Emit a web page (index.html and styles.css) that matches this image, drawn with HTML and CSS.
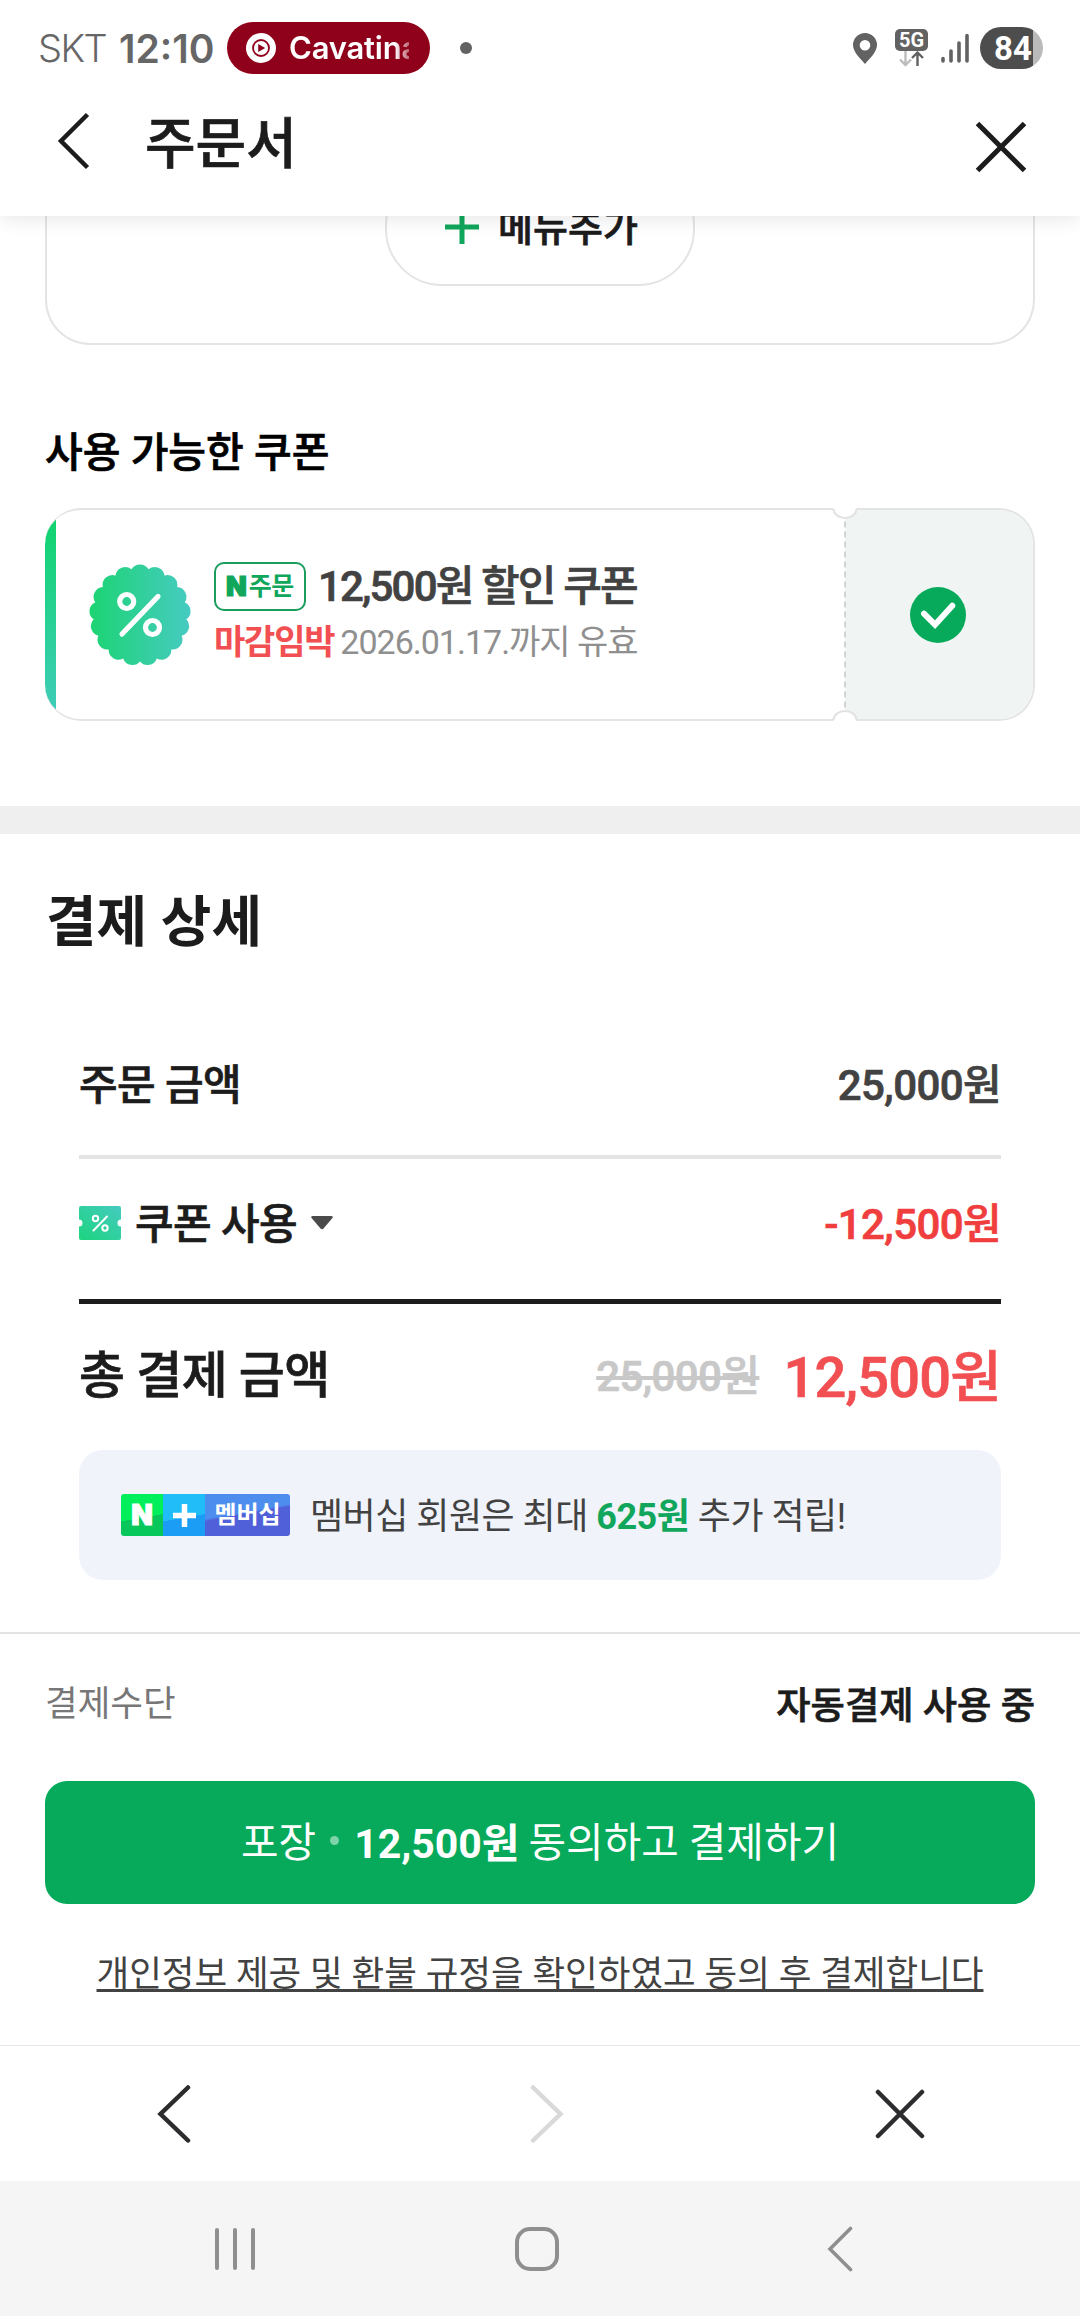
FILE: index.html
```html
<!DOCTYPE html>
<html lang="ko">
<head>
<meta charset="utf-8">
<title>주문서</title>
<link rel="stylesheet" href="styles.css">
</head>
<body>
<header class="top">
  <div class="status">
    <span class="carrier">SKT</span>
    <span class="clock">12:10</span>
    <div class="media">
      <svg width="30" height="30" viewBox="0 0 30 30"><circle cx="15" cy="15" r="15" fill="#fff"/><circle cx="15" cy="15" r="8" fill="none" stroke="#8f001a" stroke-width="1.8"/><path d="M12.2 11l7 4-7 4z" fill="#8f001a"/></svg>
      <span class="track">Cavatina</span>
    </div>
    <i class="more-dot"></i>
    <div class="status-icons">
      <svg class="pin" width="24" height="31" viewBox="0 0 24 31"><path fill="#626262" fill-rule="evenodd" d="M12 0a12 12 0 0 1 12 12c0 7-7 13-12 19C7 25 0 19 0 12A12 12 0 0 1 12 0zm0 7a5.300 5.300 0 1 0 0 10.600A5.300 5.300 0 0 0 12 7z"/></svg>
      <div class="net">
        <span class="net-label">5G</span>
        <svg width="33" height="16" viewBox="0 0 33 16" fill="none" stroke-width="2.400"><path stroke="#bdbdbd" d="M10.500 0v14M5 8.500l5.500 5.500 5.500-5.500"/><path stroke="#626262" d="M22.500 15V2M17 7l5.500-5.500L28 7"/></svg>
      </div>
      <svg class="signal" width="28" height="30" viewBox="0 0 28 30" stroke="#626262" stroke-width="3.600" stroke-linecap="round"><path d="M2 25.500v2.500M10 18v10M18 10v18M26 2.500v25.500"/></svg>
      <div class="battery">84</div>
    </div>
  </div>
  <div class="title-bar">
    <svg class="back" width="34" height="58" viewBox="0 0 34 58" fill="none" stroke="#1c1c1c" stroke-width="4.500"><path d="M30.500 2.500L4 29l26.500 26.500"/></svg>
    <h1>주문서</h1>
    <svg class="close" width="52" height="52" viewBox="0 0 52 52" stroke="#1c1c1c" stroke-width="5"><path d="M2.500 2.500l47 47M49.500 2.500l-47 47"/></svg>
  </div>
</header>

<main>
  <section class="menu-card">
    <div class="add-menu">
      <svg width="34" height="34" viewBox="0 0 34 34" stroke="#10a65b" stroke-width="5"><path d="M17 0v34M0 17h34"/></svg>
      <span>메뉴추가</span>
    </div>
  </section>

  <section class="coupons">
    <h2>사용 가능한 쿠폰</h2>
    <div class="coupon">
      <div class="coupon-body">
        <div class="coupon-info">
          <svg width="102" height="102" viewBox="-51 -51 102 102">
            <defs><linearGradient id="seal" x1="0" x2="1" y1="0" y2="0"><stop offset="0" stop-color="#1cd472"/><stop offset="1" stop-color="#46cbc2"/></linearGradient></defs>
            <path fill="url(#seal)" d="M-8.500-45.700A9.800 9.800 0 0 1 8.500-45.700A9.800 9.800 0 0 1 24.500-39.500A9.800 9.800 0 0 1 37.100-28A9.800 9.800 0 0 1 44.700-12.700A9.800 9.800 0 0 1 46.300 4.300A9.800 9.800 0 0 1 41.600 20.700A9.800 9.800 0 0 1 31.300 34.400A9.800 9.800 0 0 1 16.800 43.400A9.800 9.800 0 0 1 0 46.500A9.800 9.800 0 0 1-16.800 43.400A9.800 9.800 0 0 1-31.300 34.400A9.800 9.800 0 0 1-41.600 20.700A9.800 9.800 0 0 1-46.300 4.300A9.800 9.800 0 0 1-44.700-12.700A9.800 9.800 0 0 1-37.100-28A9.800 9.800 0 0 1-24.500-39.500A9.800 9.800 0 0 1-8.500-45.700z"/>
            <g fill="none" stroke="#fff" stroke-width="5.200" stroke-linecap="round"><circle cx="-13.300" cy="-13.500" r="7"/><circle cx="12.500" cy="12.500" r="7"/><path d="M18-18.500l-36 37.500"/></g>
          </svg>
          <div class="coupon-text">
            <div class="coupon-title"><span class="tag"><b>N</b><span>주문</span></span><strong>12,500원 할인 쿠폰</strong></div>
            <div class="coupon-date"><b>마감임박</b><span>2026.01.17.까지 유효</span></div>
          </div>
        </div>
        <div class="coupon-check">
          <svg width="56" height="56" viewBox="0 0 56 56"><circle cx="28" cy="28" r="28" fill="#06aa5a"/><path d="M14 26.700l11 11L42.300 18.700" fill="none" stroke="#fff" stroke-width="6" stroke-linecap="round"/></svg>
        </div>
      </div>
      <svg class="perforation" width="26" height="213" viewBox="0 0 26 213">
        <path d="M1.500 0a11.500 10 0 0 0 23 0z" fill="#fff"/><path d="M1.500 1a11.500 9 0 0 0 23 0" fill="none" stroke="#e2e2e2" stroke-width="2"/>
        <path d="M1.500 213a11.500 10 0 0 1 23 0z" fill="#fff"/><path d="M1.500 212a11.500 9 0 0 1 23 0" fill="none" stroke="#e2e2e2" stroke-width="2"/>
        <path d="M13 13.500v187" stroke="#d3d3d3" stroke-width="2" stroke-dasharray="6 4"/>
      </svg>
    </div>
  </section>

  <section class="payment">
    <h2>결제 상세</h2>
    <div class="bill">
      <div class="row order"><span class="label">주문 금액</span><span class="price">25,000원</span></div>
      <div class="row discount">
        <span class="label with-icon">
          <svg class="ticket" width="42" height="34" viewBox="0 0 42 34"><defs><linearGradient id="ticket" x1="0" x2="1" y1="1" y2="0"><stop offset="0" stop-color="#1cd47e"/><stop offset="1" stop-color="#45cbc0"/></linearGradient></defs><path fill="url(#ticket)" d="M2 0h38a2 2 0 0 1 2 2v11.500a3.500 3.500 0 0 0 0 7V32a2 2 0 0 1-2 2H2a2 2 0 0 1-2-2V20.500a3.500 3.500 0 0 0 0-7V2a2 2 0 0 1 2-2z"/><g fill="none" stroke="#fff" stroke-width="2" stroke-linecap="round"><circle cx="16.500" cy="12.500" r="2.700"/><circle cx="26" cy="22" r="2.700"/><path d="M28 10.500L14.500 24.500"/></g></svg>
          <span>쿠폰 사용</span>
          <svg class="caret" width="22" height="14" viewBox="0 0 22 14"><path d="M2 0h18q3 0 1 2.500l-8.500 10q-1.500 1.500-3 0L1 2.500Q-1 0 2 0z" fill="#4a4a4a"/></svg>
        </span>
        <span class="price red">-12,500원</span>
      </div>
      <div class="row total"><span class="label">총 결제 금액</span><span class="amounts"><del>25,000원</del><strong>12,500원</strong></span></div>
      <div class="membership">
        <span class="badge"><b class="n">N</b><svg class="plus" width="42" height="42" viewBox="0 0 42 42" stroke="#fff" stroke-width="5.500"><path d="M21.500 10v23M10 21.500h23"/></svg><b class="word">멤버십</b></span>
        <p>멤버십 회원은 최대 <b>625원</b> 추가 적립!</p>
      </div>
    </div>
  </section>
</main>

<footer class="checkout">
  <div class="method"><span>결제수단</span><strong>자동결제 사용 중</strong></div>
  <div class="pay"><span>포장</span><i></i><b>12,500원</b><span class="agree">동의하고 결제하기</span></div>
  <p class="terms"><span>개인정보 제공 및 환불 규정을 확인하였고 동의 후 결제합니다</span></p>
</footer>

<nav class="browser-bar">
  <svg class="b-back" width="34" height="58" viewBox="0 0 34 58" fill="none" stroke="#2c2c2e" stroke-width="4.500" stroke-linecap="round"><path d="M31 2.500L3.500 29 31 55.500"/></svg>
  <svg class="b-next" width="34" height="58" viewBox="0 0 34 58" fill="none" stroke="#d9d9d9" stroke-width="4.500" stroke-linecap="round"><path d="M3 2.500L30.500 29 3 55.500"/></svg>
  <svg class="b-close" width="50" height="50" viewBox="0 0 50 50" stroke="#2c2c2e" stroke-width="4.500" stroke-linecap="round"><path d="M3 3l44 44M47 3L3 47"/></svg>
</nav>
<nav class="system-bar">
  <svg class="s-recent" width="40" height="42" viewBox="0 0 40 42" stroke="#8f8f8f" stroke-width="4" stroke-linecap="round"><path d="M2 2v38M20 2v38M38 2v38"/></svg>
  <svg class="s-home" width="44" height="44" viewBox="0 0 44 44" fill="none" stroke="#8f8f8f" stroke-width="4"><rect x="2" y="2" width="40" height="40" rx="13"/></svg>
  <svg class="s-back" width="26" height="46" viewBox="0 0 26 46" fill="none" stroke="#8f8f8f" stroke-width="3.600" stroke-linecap="round"><path d="M23.500 2.500L3 23l20.500 20.500"/></svg>
</nav>
</body>
</html>
```
FILE: styles.css
```css
* { box-sizing: border-box; margin: 0; padding: 0; }
body {
  width: 1080px; height: 2316px; overflow: hidden;
  display: flex; flex-direction: column;
  background: #fff; color: #1c1c1c;
  font-family: Roboto, "Noto Sans CJK KR", sans-serif;
  white-space: nowrap;
}
svg { display: block; flex: none; }
i { font-style: normal; }

/* Weight between medium and bold */
h1, .add-menu span, .coupons h2, .coupon-title strong, .label, .price, .amounts, .method strong { -webkit-text-stroke: .7px currentColor; }

.top { position: relative; z-index: 1; flex: none; height: 216px; background: #fff; box-shadow: 0 4px 18px rgba(0, 0, 0, .09); }
.status { display: flex; align-items: center; height: 96px; padding: 0 37px 0 38px; color: #666; font-family: Inter, sans-serif; }
.carrier { width: 81px; font-size: 38px; font-weight: 300; letter-spacing: -1.500px; }
.clock { width: 108px; font-size: 39px; font-weight: 600; letter-spacing: 0; }
.media { display: flex; align-items: center; gap: 13px; width: 203px; height: 52px; padding-left: 19px; border-radius: 26px; background: #8f001a; color: #fff; }
.track { width: 120px; overflow: hidden; font-size: 31px; font-weight: 600; letter-spacing: -.2px; line-height: 52px; -webkit-mask-image: linear-gradient(90deg, #000 88%, rgba(0, 0, 0, .4)); mask-image: linear-gradient(90deg, #000 88%, rgba(0, 0, 0, .4)); }
.more-dot { width: 12px; height: 12px; margin-left: 30px; border-radius: 50%; background: #626262; }
.status-icons { display: flex; align-items: center; margin-left: auto; }
.net { width: 33px; height: 38px; margin: 0 13px 0 18px; }
.net-label { display: block; height: 22px; border-radius: 5px; background: #626262; color: #fff; font: 700 20px/22px Roboto, sans-serif; text-align: center; }
.battery { width: 63px; height: 42px; margin-left: 11px; padding: 0 4px 0 7px; border-radius: 21px; background: linear-gradient(90deg, #4d4d4d 53px, #bababa 53px); color: #fff; font: 700 33px/43px Roboto, sans-serif; text-align: center; }
.title-bar { display: flex; align-items: center; height: 120px; padding: 0 53px 0 57px; }
.back { margin-top: -30px; }
h1 { flex: 1; margin: -24px 0 0 54px; font-size: 55px; font-weight: 500; line-height: 80px; }
.close { margin-top: -18px; }

main { flex: none; height: 1416px; }
.menu-card { height: 129px; margin: 0 45px; border: 2px solid #e4e4e4; border-top: 0; border-radius: 0 0 45px 45px; }
.add-menu { display: flex; align-items: center; justify-content: center; gap: 19px; width: 310px; height: 118px; margin: 0 auto; padding-left: 3px; border: 2px solid #e4e4e4; border-radius: 57px; transform: translateY(-48px); font-size: 38px; font-weight: 500; }
.add-menu span { margin-top: -6px; }

.coupons { height: 489px; padding: 78px 45px 0; border-bottom: 28px solid #efefef; }
.coupons h2 { height: 60px; margin-bottom: 25px; color: #000; font-size: 41px; font-weight: 500; line-height: 60px; }
.coupon { position: relative; height: 213px; }
.coupon-body { display: flex; height: 213px; border: 2px solid #e4e4e4; border-left: 0; border-radius: 36px; overflow: hidden; background: linear-gradient(#0fd46b, #40ccba) 0 0 / 11px 100% no-repeat; }
.coupon-info { display: flex; align-items: center; gap: 23px; width: 800px; padding-left: 44px; }
.coupon-title { display: flex; align-items: center; height: 50px; padding-top: 1px; }
.tag { display: flex; align-items: center; gap: 2px; width: 92px; height: 49px; margin-top: 2px; padding-left: 10px; border: 2.500px solid #1b9d5d; border-radius: 10px; color: #10a65b; }
.tag b { font: 900 27px/45px Inter, sans-serif; -webkit-text-stroke: 1.200px currentColor; }
.tag span { font-size: 25px; font-weight: 700; line-height: 44px; letter-spacing: -.5px; }
.coupon-title strong { margin: -7px 0 0 12px; color: #424242; font-size: 42px; font-weight: 500; letter-spacing: -1.850px; }
.coupon-date { display: flex; align-items: center; height: 60px; color: #8f8f8f; font-size: 34px; letter-spacing: -1px; margin-top: -1px; }
.coupon-date b { margin-right: 6px; color: #f24f52; font-weight: 700; letter-spacing: -1.200px; }
.coupon-check { display: flex; align-items: center; justify-content: center; flex: 1; background: #f0f5f3; padding-right: 2px; }
.perforation { position: absolute; left: 787px; top: 0; }

.payment { padding: 45px 79px 0; }
.payment h2 { margin-left: -33px; height: 86px; font-size: 55px; font-weight: 700; line-height: 86px; }
.row { display: flex; align-items: center; justify-content: space-between; }
.label { font-weight: 500; font-size: 42px; letter-spacing: -.6px; }
.price { color: #424242; font-size: 42px; font-weight: 500; letter-spacing: -.6px; }
.price.red { color: #f03e3e; }
.order { height: 135px; margin-top: 59px; border-bottom: 4px solid #e4e4e4; padding-bottom: 16px; }
.discount { height: 145px; border-bottom: 5px solid #1c1c1c; padding-bottom: 18px; }
.with-icon { display: flex; align-items: center; gap: 14px; }
.ticket, .caret { margin-top: 5px; }
.total { height: 146px; padding-bottom: 12px; }
.total .label { font-size: 50px; letter-spacing: -.6px; }
.amounts { display: flex; align-items: center; gap: 24px; margin-top: 2px; }
.amounts del { color: #c8c8c8; font-size: 42px; font-weight: 500; letter-spacing: -.6px; }
.amounts strong { color: #f24f52; font-size: 56px; font-weight: 500; letter-spacing: -.8px; }
.membership { display: flex; align-items: center; gap: 20px; height: 130px; padding-left: 42px; border-radius: 24px; background: #f0f3f9; color: #424242; font-size: 36px; letter-spacing: -.5px; }
.membership p { margin-top: -5px; }
.membership p b { color: #10a65b; }
.badge { display: flex; width: 169px; height: 42px; border-radius: 3px; overflow: hidden; color: #fff; letter-spacing: 0; }
.badge .n { width: 42px; background: linear-gradient(170deg, #00ef5b 55%, #08c75a 56%); font: 900 28px/42px Inter, sans-serif; text-align: center; -webkit-text-stroke: 1px currentColor; }
.badge .plus { background: linear-gradient(170deg, #21bdf8 55%, #1c9df5 56%); }
.badge .word { flex: 1; background: linear-gradient(170deg, #4c8dee 44%, #5060d9 48%); font-size: 24px; line-height: 42px; text-align: center; }

.checkout { flex: none; height: 413px; padding: 0 45px; border-top: 2px solid #e2e2e2; }
.method { display: flex; align-items: center; justify-content: space-between; height: 147px; }
.method span { margin-top: -14px; color: #777; font-size: 35.500px; }
.method strong { margin-top: -9px; font-size: 37.300px; font-weight: 500; }
.pay { display: flex; align-items: center; justify-content: center; height: 123px; padding-bottom: 6px; border-radius: 22px; background: #06aa5a; color: #fff; font-size: 40.800px; }
.pay i { width: 9px; height: 9px; margin: 2px 15px 0 14px; border-radius: 50%; background: #7fd3a8; }
.pay b { font-size: 41px; font-weight: 700; }
.agree { margin-left: 9px; }
.terms { height: 141px; line-height: 141px; color: #424242; font-size: 35.500px; text-align: center; }
.terms span { text-decoration: underline; text-decoration-thickness: 3px; text-underline-offset: 3px; text-decoration-skip-ink: none; }

.browser-bar { display: flex; align-items: center; flex: none; height: 136px; border-top: 1px solid #e6e6e6; }
.b-back { margin-left: 157px; }
.b-next { margin-left: 339px; }
.b-close { margin-left: 311px; }
.system-bar { display: flex; align-items: center; flex: none; height: 135px; background: #f5f5f5; }
.s-recent { margin-left: 215px; }
.s-home { margin-left: 260px; }
.s-back { margin-left: 268px; }
```
